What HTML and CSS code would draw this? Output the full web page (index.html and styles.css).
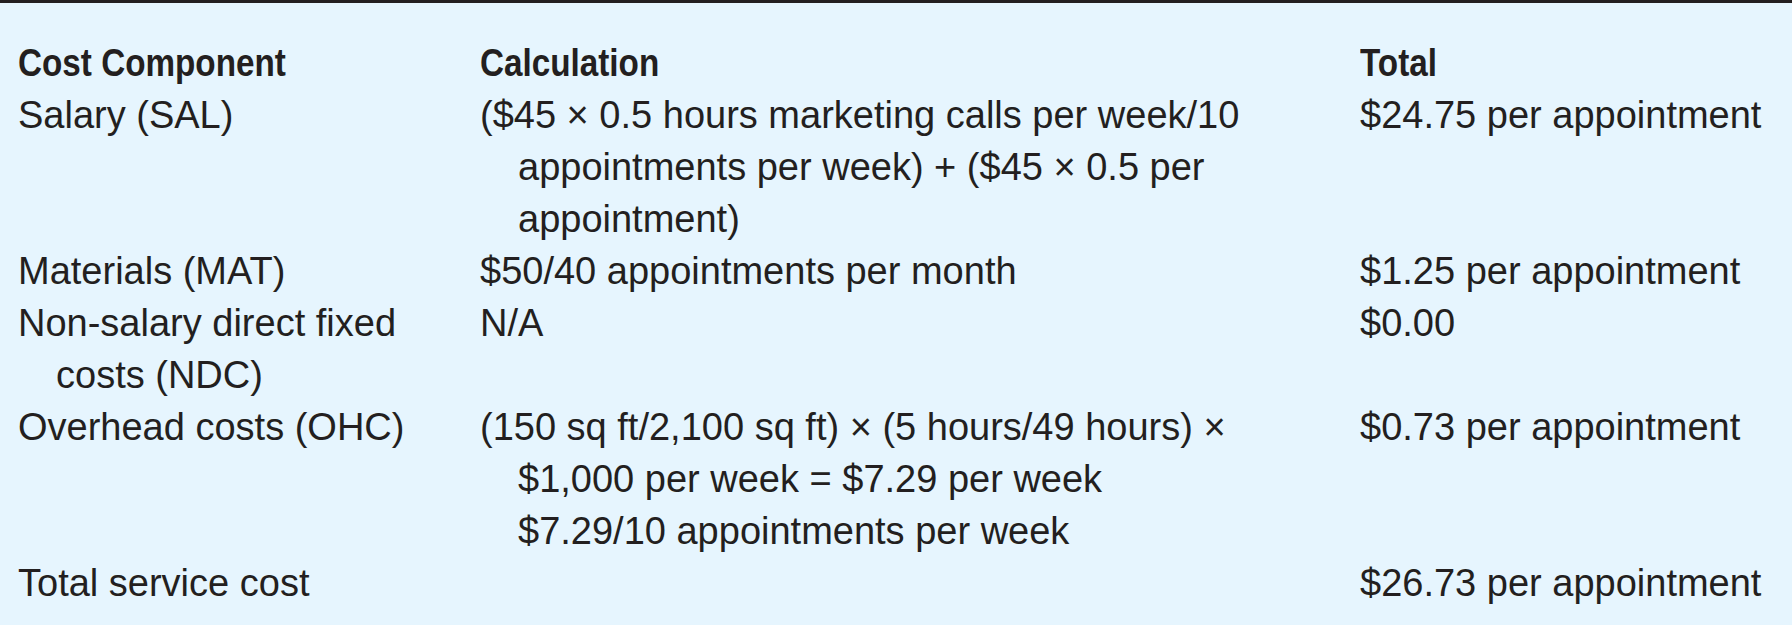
FILE: index.html
```html
<!DOCTYPE html>
<html>
<head>
<meta charset="utf-8">
<link rel="stylesheet" href="styles.css">
</head>
<body>
<div class="table">
  <div class="row head">
    <div class="c1"><span class="squeeze">Cost Component</span></div>
    <div class="c2"><span class="squeeze">Calculation</span></div>
    <div class="c3"><span class="squeeze">Total</span></div>
  </div>
  <div class="row">
    <div class="c1 hang">Salary (SAL)</div>
    <div class="c2 hang">($45 × 0.5 hours marketing calls per week/10<br>appointments per week) + ($45 × 0.5 per<br>appointment)</div>
    <div class="c3">$24.75 per appointment</div>
  </div>
  <div class="row">
    <div class="c1 hang">Materials (MAT)</div>
    <div class="c2 hang">$50/40 appointments per month</div>
    <div class="c3">$1.25 per appointment</div>
  </div>
  <div class="row">
    <div class="c1 hang">Non-salary direct fixed<br>costs (NDC)</div>
    <div class="c2 hang">N/A</div>
    <div class="c3">$0.00</div>
  </div>
  <div class="row">
    <div class="c1 hang">Overhead costs (OHC)</div>
    <div class="c2 hang">(150 sq ft/2,100 sq ft) × (5 hours/49 hours) ×<br>$1,000 per week = $7.29 per week<br>$7.29/10 appointments per week</div>
    <div class="c3">$0.73 per appointment</div>
  </div>
  <div class="row">
    <div class="c1 hang">Total service cost</div>
    <div class="c2 hang"></div>
    <div class="c3">$26.73 per appointment</div>
  </div>
</div>
</body>
</html>
```
FILE: styles.css
```css
html, body {
  margin: 0;
  padding: 0;
  background: #e6f5fe;
}
.table {
  width: 1792px;
  height: 625px;
  box-sizing: border-box;
  border-top: 3px solid #231f20;
  padding: 34px 0 0 18px;
  background: #e6f5fe;
  font-family: "Liberation Sans", Arial, sans-serif;
  font-size: 38px;
  line-height: 52px;
  color: #231f20;
}
.row {
  display: grid;
  grid-template-columns: 462px 880px 1fr;
}
.head {
  font-weight: bold;
}
.squeeze {
  display: inline-block;
  transform: scaleX(0.875);
  transform-origin: left center;
}
.hang {
  padding-left: 38px;
  text-indent: -38px;
}
.c1, .c2, .c3 {
  white-space: nowrap;
}
```
